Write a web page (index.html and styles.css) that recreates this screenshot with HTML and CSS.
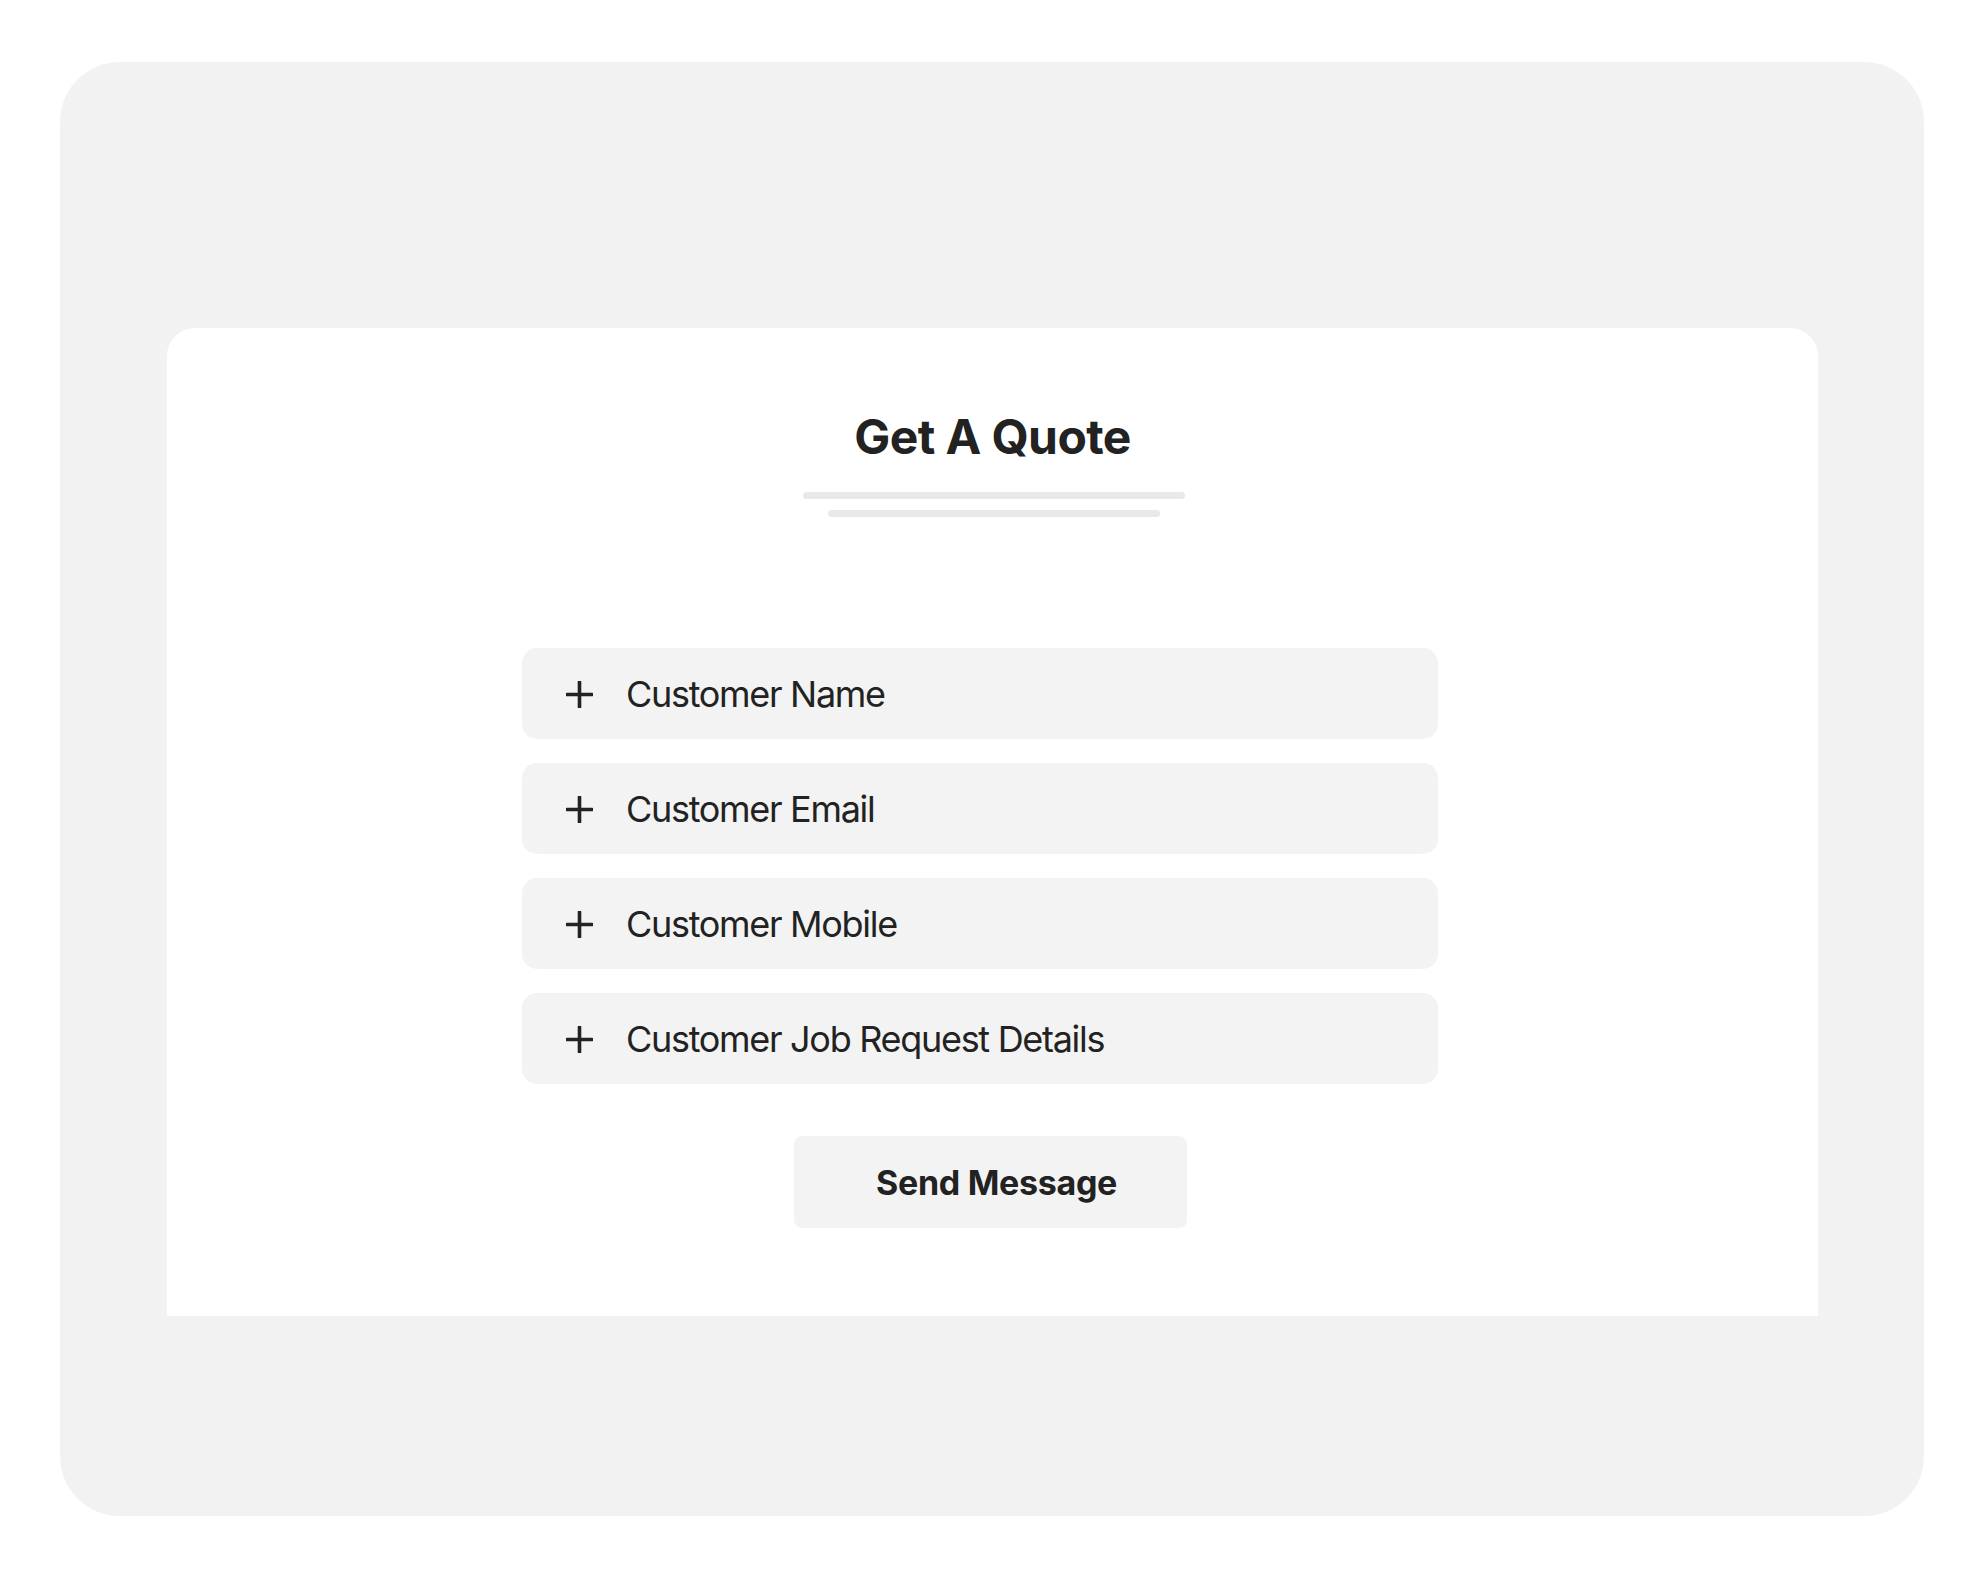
FILE: index.html
```html
<!DOCTYPE html>
<html lang="en">
<head>
<meta charset="utf-8">
<title>Get A Quote</title>
<link rel="stylesheet" href="styles.css">
</head>
<body>
<div class="frame">
  <div class="card">
    <h1 class="title">Get A Quote</h1>
    <div class="rule rule-long"></div>
    <div class="rule rule-short"></div>
    <div class="fields">
      <div class="field">
        <svg class="plus" viewBox="0 0 27 27" aria-hidden="true"><path d="M13.5 1v25M1 13.5h25" stroke="#222" stroke-width="3.6" stroke-linecap="round" fill="none"/></svg>
        <span class="label">Customer Name</span>
      </div>
      <div class="field">
        <svg class="plus" viewBox="0 0 27 27" aria-hidden="true"><path d="M13.5 1v25M1 13.5h25" stroke="#222" stroke-width="3.6" stroke-linecap="round" fill="none"/></svg>
        <span class="label">Customer Email</span>
      </div>
      <div class="field">
        <svg class="plus" viewBox="0 0 27 27" aria-hidden="true"><path d="M13.5 1v25M1 13.5h25" stroke="#222" stroke-width="3.6" stroke-linecap="round" fill="none"/></svg>
        <span class="label">Customer Mobile</span>
      </div>
      <div class="field">
        <svg class="plus" viewBox="0 0 27 27" aria-hidden="true"><path d="M13.5 1v25M1 13.5h25" stroke="#222" stroke-width="3.6" stroke-linecap="round" fill="none"/></svg>
        <span class="label">Customer Job Request Details</span>
      </div>
    </div>
    <div class="button-row">
      <button class="send">Send Message</button>
    </div>
  </div>
</div>
</body>
</html>
```

FILE: styles.css
```css
* { box-sizing: border-box; }

html, body {
  margin: 0;
  padding: 0;
  background: #ffffff;
}

body {
  font-family: Inter, "Noto Sans", "Liberation Sans", sans-serif;
  color: #222222;
}

.frame {
  margin: 62px 0 0 60px;
  width: 1864px;
  height: 1454px;
  background: #f2f2f2;
  border-radius: 60px;
  padding: 266px 0 0 107px;
}

.card {
  width: 1651px;
  height: 988px;
  background: #ffffff;
  border-radius: 28px 28px 0 0;
  padding-top: 80px;
  display: flex;
  flex-direction: column;
  align-items: center;
}

.title {
  margin: 0;
  font-size: 48px;
  line-height: 58px;
  font-weight: 700;
  color: #222222;
  letter-spacing: -0.6px;
}

.rule {
  height: 7px;
  border-radius: 4px;
  background: #e9e9e9;
}

.rule-long {
  width: 382px;
  margin-top: 26px;
  margin-left: 3px;
}

.rule-short {
  width: 332px;
  margin-top: 11px;
  margin-left: 3px;
}

.fields {
  align-self: flex-start;
  margin: 131px 0 0 355px;
  width: 916px;
  display: flex;
  flex-direction: column;
  gap: 24px;
}

.field {
  height: 91px;
  background: #f3f3f3;
  border-radius: 15px;
  display: flex;
  align-items: center;
  padding-left: 44px;
  gap: 33px;
}

.plus {
  width: 27px;
  height: 27px;
  flex: none;
  margin-top: 2px;
}

.label {
  font-size: 36px;
  font-weight: 400;
  color: #222222;
  letter-spacing: -1.3px;
}

.button-row {
  align-self: flex-start;
  margin: 52px 0 0 627px;
}

.send {
  width: 393px;
  height: 92px;
  border: none;
  border-radius: 8px;
  background: #f3f3f3;
  font-family: Inter, "Noto Sans", "Liberation Sans", sans-serif;
  font-size: 34px;
  font-weight: 700;
  color: #222222;
  padding: 0 0 0 12px;
  letter-spacing: -0.3px;
}
```
